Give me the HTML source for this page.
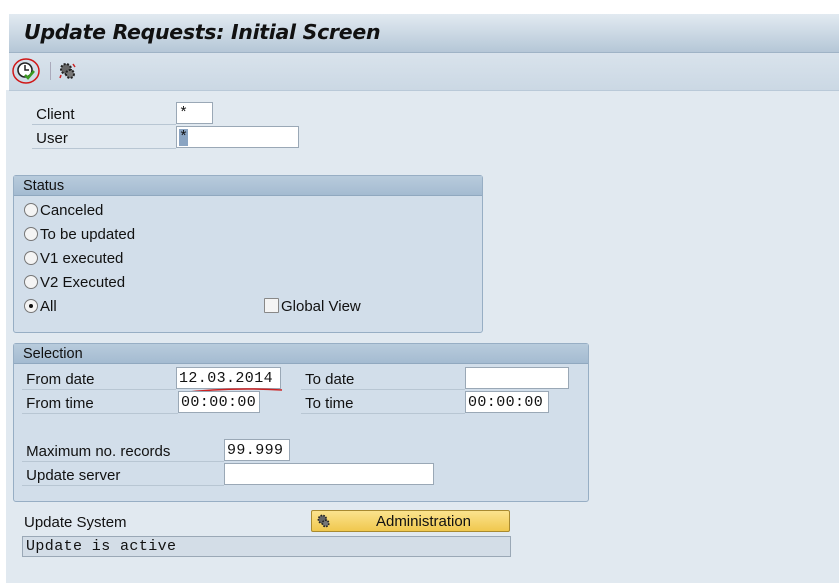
<!DOCTYPE html>
<html><head><style>
body{margin:0;width:839px;height:583px;background:#fff;position:relative;overflow:hidden;font-family:"Liberation Sans",sans-serif;font-size:15px;color:#111}
.a{position:absolute}
#main{left:6px;top:90px;width:833px;height:493px;background:#e1e9f0}
#title{left:9px;top:14px;width:830px;height:38px;background:linear-gradient(#e2eaf1,#b5c7d7);border-bottom:1px solid #9fb3c6}
#title span{position:absolute;left:15px;top:6px;font-family:"DejaVu Sans",sans-serif;font-size:20.5px;font-weight:bold;font-style:italic;color:#111;letter-spacing:-0.3px}
#tb{left:9px;top:53px;width:830px;height:37px;background:linear-gradient(#d9e3ec,#cbd8e4);border-bottom:1px solid #b9c9d8}
.lbl{position:absolute;height:22px;line-height:25px;border-bottom:1px solid #b8c6d3}
.in{position:absolute;background:#fff;border:1px solid #9aa8b6;font-family:"Liberation Mono",monospace;font-size:15px;letter-spacing:0.4px;line-height:21px;padding-left:2px;box-sizing:border-box;height:22px;overflow:hidden;white-space:nowrap}
.grp{position:absolute;background:#d2deea;border:1px solid #97aec4;border-radius:3px}
.gh{height:19px;background:linear-gradient(#b8cbdc,#a4bbd1);border-bottom:1px solid #90a8bf;padding-left:9px;line-height:20px;font-size:14.5px}
.r{position:absolute;left:10px;height:20px;line-height:22px}
.r i{display:inline-block;width:12px;height:12px;border:1px solid #777;border-radius:50%;background:#f4f4f4;vertical-align:-2px;margin-right:2px;position:relative}
</style></head><body>
<div class="a" id="main"></div>
<div class="a" id="title"><span>Update Requests: Initial Screen</span></div>
<div class="a" id="tb">
<svg class="a" style="left:1px;top:3px" width="34" height="30" viewBox="0 0 34 30"><ellipse cx="16" cy="15" rx="13" ry="12" fill="none" stroke="#d01818" stroke-width="1.5"/><circle cx="15" cy="14" r="7" fill="#fff" stroke="#222" stroke-width="1.6"/><path d="M15 9v5h4" stroke="#222" stroke-width="1.5" fill="none"/><path d="M15 19l3 3 6-7" stroke="#3a9a20" stroke-width="2.5" fill="none"/></svg>
<div class="a" style="left:41px;top:9px;width:1px;height:18px;background:#aab"></div>
<svg class="a" style="left:49px;top:8px" width="20" height="20" viewBox="0 0 20 20"><circle cx="8" cy="8" r="5" fill="#666" stroke="#222" stroke-width="2" stroke-dasharray="2 1.5"/><circle cx="12" cy="13" r="4" fill="#777" stroke="#222" stroke-width="2" stroke-dasharray="2 1.5"/><path d="M15 3l2 3M3 14l-1 3" stroke="#c22" stroke-width="1.5"/></svg>
</div>
<div class="lbl" style="left:32px;top:102px;width:144px">&nbsp;Client</div>
<div class="in" style="left:176px;top:102px;width:37px">*</div>
<div class="lbl" style="left:32px;top:126px;width:144px">&nbsp;User</div>
<div class="in" style="left:176px;top:126px;width:123px"><span style="background:#8aa4c2">*</span></div>

<div class="grp" style="left:13px;top:175px;width:468px;height:156px"><div class="gh">Status</div>
<div class="r" style="top:24px"><i></i>Canceled</div>
<div class="r" style="top:48px"><i></i>To be updated</div>
<div class="r" style="top:72px"><i></i>V1 executed</div>
<div class="r" style="top:96px"><i></i>V2 Executed</div>
<div class="r" style="top:120px"><i><b style="position:absolute;left:4px;top:4px;width:4px;height:4px;border-radius:50%;background:#111"></b></i>All</div>
<div class="r" style="top:120px;left:250px"><i style="border-radius:1px;width:13px;height:13px;border-color:#888"></i>Global View</div>
</div>

<div class="grp" style="left:13px;top:343px;width:574px;height:157px"><div class="gh">Selection</div></div>
<div class="lbl" style="left:22px;top:367px;width:154px">&nbsp;From date</div>
<div class="in" style="left:176px;top:367px;width:105px">12.03.2014</div>
<svg class="a" style="left:178px;top:387px" width="106" height="8"><path d="M2 6Q50 0 104 3" stroke="#c22" stroke-width="1.5" fill="none"/></svg>
<div class="lbl" style="left:301px;top:367px;width:164px">&nbsp;To date</div>
<div class="in" style="left:465px;top:367px;width:104px"></div>
<div class="lbl" style="left:22px;top:391px;width:156px">&nbsp;From time</div>
<div class="in" style="left:178px;top:391px;width:82px">00:00:00</div>
<div class="lbl" style="left:301px;top:391px;width:164px">&nbsp;To time</div>
<div class="in" style="left:465px;top:391px;width:84px">00:00:00</div>
<div class="lbl" style="left:22px;top:439px;width:202px">&nbsp;Maximum no. records</div>
<div class="in" style="left:224px;top:439px;width:66px">99.999</div>
<div class="lbl" style="left:22px;top:463px;width:202px">&nbsp;Update server</div>
<div class="in" style="left:224px;top:463px;width:210px"></div>

<div class="a" style="left:24px;top:512px;line-height:22px">Update System</div>
<div class="a" style="left:311px;top:510px;width:199px;height:22px;background:linear-gradient(#fbe38e,#f0c84e);border:1px solid #a88a30;border-radius:2px;box-sizing:border-box;line-height:22px;text-align:center">
<svg class="a" style="left:4px;top:2px" width="16" height="16" viewBox="0 0 20 20"><circle cx="8" cy="8" r="5" fill="#666" stroke="#222" stroke-width="2" stroke-dasharray="2 1.5"/><circle cx="12" cy="13" r="4" fill="#777" stroke="#222" stroke-width="2" stroke-dasharray="2 1.5"/></svg>
<span style="margin-left:26px">Administration</span></div>
<div class="a" style="left:22px;top:536px;width:489px;height:21px;background:#d3dde7;border:1px solid #9aa8b6;box-sizing:border-box;font-family:'Liberation Mono',monospace;font-size:15px;letter-spacing:0.4px;line-height:19px;padding-left:3px">Update is active</div>
</body></html>
